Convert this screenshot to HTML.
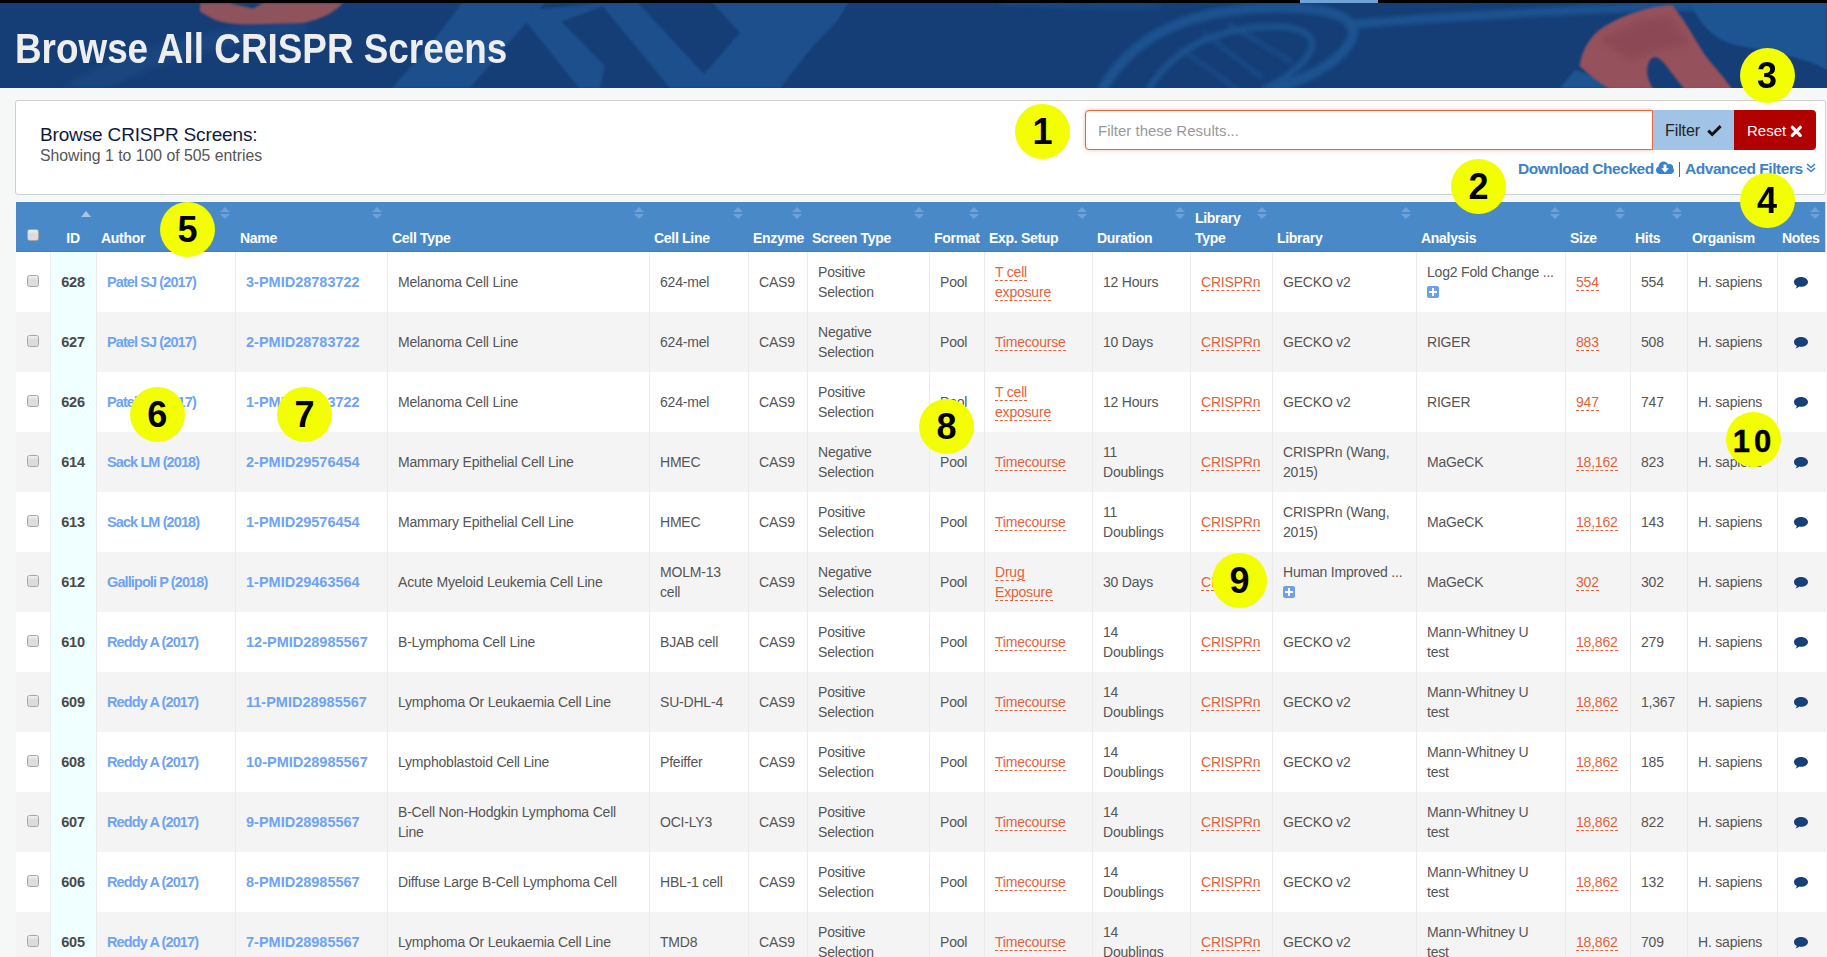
<!DOCTYPE html>
<html><head><meta charset="utf-8"><title>Browse All CRISPR Screens</title>
<style>
*{box-sizing:border-box;margin:0;padding:0}
html,body{width:1827px;height:957px;overflow:hidden}
body{background:#f6f8f7;font-family:"Liberation Sans",sans-serif;position:relative}
.topbar{position:absolute;left:0;top:0;width:1827px;height:3px;background:#000}
.topbar i{position:absolute;left:1300px;top:0;width:78px;height:3px;background:#6fa3d8}
.banner{position:absolute;left:0;top:3px;width:1827px;height:85px;background:#153e77;overflow:hidden}
.banner svg{position:absolute;left:0;top:0}
.title{position:absolute;left:15px;top:18px;font-weight:bold;font-size:43px;line-height:60px;color:#eeeeee;white-space:nowrap;transform-origin:0 0}
.panel{position:absolute;left:15px;top:100px;width:1811px;height:95px;background:#fff;border:1px solid #cfcfcf;border-radius:3px}
.abs{position:absolute;white-space:nowrap}
.ptitle{left:40px;top:123px;font-size:19px;letter-spacing:-0.15px;line-height:24px;color:#0d1b3e}
.psub{left:40px;top:146px;font-size:15.8px;line-height:20px;color:#555}
.inp{position:absolute;left:1085px;top:110px;width:568px;height:40px;border:1px solid #e8663f;border-radius:4px 0 0 4px;background:#fff;box-shadow:0 0 4px rgba(232,102,63,.45)}
.inp span{position:absolute;left:12px;top:10px;font-size:15px;line-height:20px;color:#999}
.bfilter{position:absolute;left:1653px;top:110px;width:81px;height:40px;background:#a1c3e5;color:#222;font-size:15px;line-height:40px}
.breset{position:absolute;left:1734px;top:110px;width:82px;height:40px;background:#b00000;color:#fff;font-size:15px;line-height:40px;border-radius:0 4px 4px 0}
.links{position:absolute;top:158px;font-size:15.5px;letter-spacing:-0.45px;line-height:20px;font-weight:bold;color:#3d82c6;white-space:nowrap}
.tbl{position:absolute;left:16px;top:202px;width:1810px;height:760px;background:#fff;border-left:1px solid #dcdcdc;border-right:1px solid #dcdcdc}
.thead{position:absolute;left:16px;top:202px;width:1809px;height:50px;background:#4a89c8;border-bottom:1px solid #3f7fc0}
.hl{position:absolute;color:#fff;font-weight:bold;font-size:14px;letter-spacing:-0.3px;line-height:20px;white-space:nowrap}
.sort{position:absolute;width:10px;height:13px}
.row{position:absolute;left:16px;width:1810px;height:60px}
.row.odd{background:#fff}
.row.even{background:#f4f4f4}
.vline{position:absolute;top:252px;width:1px;height:705px;background:#ebebeb}
.idcol{position:absolute;left:51px;top:252px;width:45px;height:705px;background:#f0ffff}
.c{position:absolute;font-size:14px;letter-spacing:-0.2px;line-height:20px;color:#555;white-space:nowrap}
.c.id{font-weight:bold;color:#4a4a4a;text-align:center;font-size:14.5px;letter-spacing:-0.2px}
.bl{font-weight:bold;color:#6ea3f4;font-size:14.5px;letter-spacing:0}
.au{letter-spacing:-0.9px}
.rl{color:#e0633d;border-bottom:1px dashed #e0633d}
.plus{display:inline-block;width:12px;height:12px;background:#6c9ff0;border-radius:2px;position:relative;vertical-align:middle;top:-1px}
.plus:before{content:"";position:absolute;left:5px;top:2px;width:2px;height:8px;background:#fff}
.plus:after{content:"";position:absolute;left:2px;top:5px;width:8px;height:2px;background:#fff}
.cb{position:absolute;width:12px;height:12px;border:1px solid #a6a6a6;border-radius:2.5px;background:linear-gradient(#f0f0f0,#dcdcdc 40%,#dcdcdc)}
.circ{position:absolute;width:55px;height:55px;border-radius:50%;background:#f3fe00;color:#000;font-weight:bold;font-size:36px;line-height:55px;text-align:center}
.circ span{display:inline-block}
</style></head><body>
<div class="topbar"><i></i></div>
<div class="banner"><svg width="1827" height="85" viewBox="0 3 1827 85">
<defs>
<filter id="bl1" x="-20%" y="-20%" width="140%" height="140%"><feGaussianBlur stdDeviation="1.2"/></filter>
<filter id="bl2" x="-20%" y="-50%" width="140%" height="200%"><feGaussianBlur stdDeviation="2"/></filter>
<filter id="bl3" x="-20%" y="-50%" width="140%" height="200%"><feGaussianBlur stdDeviation="3"/></filter>
</defs>
<rect x="0" y="3" width="1827" height="85" fill="#153e77"/>
<g fill="#1d4f8c" filter="url(#bl3)" opacity="0.9">
<path d="M60 88 C120 50 200 30 300 20 L310 30 C220 45 150 65 110 88 Z" opacity="0.5"/>
</g>
<g fill="#1d4f8b" filter="url(#bl1)">
<path d="M462 3 L545 3 L520 30 L470 88 L392 88 L430 45 Z"/>
<path d="M513 12 L600 3 L612 3 L560 22 Z"/>
<path d="M520 14 L548 8 L605 66 L600 88 L579 88 Z"/>
<path d="M600 3 L638 3 L705 75 L690 88 L670 88 Z"/>
<path d="M713 3 L848 3 L838 20 L813 46 L780 88 L685 88 L703 75 L740 33 Z"/>
</g>
<g fill="none" stroke="#1e5290" filter="url(#bl2)">
<path d="M1102 90 C1130 40 1180 12 1260 8 C1330 5 1365 18 1350 42 C1335 68 1300 80 1272 90" stroke-width="10"/>
<path d="M1148 90 C1170 55 1200 35 1250 28 C1300 22 1322 35 1308 55 C1298 70 1282 80 1262 90" stroke-width="6"/>
<path d="M1180 48 L1238 90 M1203 32 L1262 78 M1228 24 L1292 62" stroke-width="4" opacity="0.7"/>
<path d="M1345 25 C1420 18 1500 14 1600 9 C1700 5 1760 4 1827 3" stroke-width="9"/>
<path d="M1000 3 C1050 5 1100 8 1160 6" stroke-width="5" opacity="0.5"/>
</g>
<g fill="#1f5592" filter="url(#bl1)">
<path d="M1690 3 L1827 3 L1827 70 C1800 55 1760 50 1735 45 C1715 40 1700 25 1690 3 Z"/>
<path d="M1560 88 L1575 70 L1600 78 L1609 88 Z"/>
</g>
<g fill="#95515c" filter="url(#bl1)">
<path d="M200 3 L229 3 L253 8.5 L263 3 L343 3 C335 12 322 19 304 23 L251 24.5 C235 24 221 23.6 212 18.4 C206 15 202 13 200 11.4 Z" fill="#8e525d"/>
<path d="M1579.5 66 C1582 50 1590 35 1605 26 C1625 14 1650 6 1672 5 C1685 20 1695 40 1705 55 C1715 68 1725 78 1732 89 L1684.6 89 C1678 82 1670 70 1663 62 C1658 56 1653 56 1650 60 C1645 68 1647 80 1653.4 89 L1609 89 C1598 82 1588 74 1579.5 66 Z"/>
</g>
<g fill="#7e3d4a" opacity="0.35" filter="url(#bl3)">
<path d="M1600 40 L1640 20 L1670 15 L1690 45 L1660 50 L1630 60 Z"/>
</g>
</svg></div>
<div class="title" style="transform:scaleX(0.857)">Browse All CRISPR Screens</div>
<div class="panel"></div>
<div class="abs ptitle">Browse CRISPR Screens:</div>
<div class="abs psub">Showing 1 to 100 of 505 entries</div>
<div class="inp"><span>Filter these Results...</span></div>
<div class="bfilter"><span style="position:absolute;left:12px;top:1px;font-size:16px;letter-spacing:-0.1px">Filter</span><svg style="position:absolute;left:54px;top:15px" width="15" height="12" viewBox="0 0 15 12"><path d="M1.3 5.6 L5.2 9.5 L13.6 1.1" stroke="#111" stroke-width="2.9" fill="none"/></svg></div>
<div class="breset"><span style="position:absolute;left:13px;top:1px">Reset</span><svg style="position:absolute;left:56px;top:15px" width="13" height="13" viewBox="0 0 13 13"><path d="M2.3 2.3 L10.3 10.3 M10.3 2.3 L2.3 10.3" stroke="#fff" stroke-width="3.2" stroke-linecap="round" fill="none"/></svg></div>
<div class="links" style="left:1518px;top:159px">Download Checked</div>
<svg class="abs" style="left:1656px;top:160px" width="18" height="14" viewBox="0 0 18 14"><path d="M4 14 C1.8 14 0 12.3 0 10.2 C0 8.5 1.1 7.1 2.7 6.6 C2.7 6.5 2.7 6.3 2.7 6.2 C2.7 3.5 4.9 1.4 7.6 1.4 C9.6 1.4 11.3 2.6 12.1 4.3 C12.6 4 13.2 3.9 13.8 3.9 C15.7 3.9 17.2 5.4 17.2 7.3 C17.2 7.6 17.2 7.9 17.1 8.2 C17.7 8.8 18 9.6 18 10.5 C18 12.4 16.4 14 14.5 14 Z" fill="#3d82c6"/><path d="M7.6 4.6 H10.4 V8.2 H12.8 L9 12.4 L5.2 8.2 H7.6 Z" fill="#fff"/></svg>
<div class="abs" style="left:1679px;top:162px;width:1px;height:15px;background:#666"></div>
<div class="links" style="left:1685px;top:159px">Advanced Filters</div>
<svg class="abs" style="left:1806px;top:163px" width="10" height="10" viewBox="0 0 10 10"><path d="M1 1 L5 4.5 L9 1 M1 5 L5 8.5 L9 5" stroke="#3d82c6" stroke-width="1.6" fill="none"/></svg>
<div class="tbl"></div>

<div class="row odd" style="top:252px"></div>
<div class="row even" style="top:312px"></div>
<div class="row odd" style="top:372px"></div>
<div class="row even" style="top:432px"></div>
<div class="row odd" style="top:492px"></div>
<div class="row even" style="top:552px"></div>
<div class="row odd" style="top:612px"></div>
<div class="row even" style="top:672px"></div>
<div class="row odd" style="top:732px"></div>
<div class="row even" style="top:792px"></div>
<div class="row odd" style="top:852px"></div>
<div class="row even" style="top:912px"></div>
<div class="idcol"></div>
<div class="vline" style="left:50px"></div>
<div class="vline" style="left:96px"></div>
<div class="vline" style="left:235px"></div>
<div class="vline" style="left:387px"></div>
<div class="vline" style="left:649px"></div>
<div class="vline" style="left:748px"></div>
<div class="vline" style="left:807px"></div>
<div class="vline" style="left:929px"></div>
<div class="vline" style="left:984px"></div>
<div class="vline" style="left:1092px"></div>
<div class="vline" style="left:1190px"></div>
<div class="vline" style="left:1272px"></div>
<div class="vline" style="left:1416px"></div>
<div class="vline" style="left:1565px"></div>
<div class="vline" style="left:1630px"></div>
<div class="vline" style="left:1687px"></div>
<div class="vline" style="left:1777px"></div>
<div class="thead"></div>
<div class="cb" style="left:27px;top:229px"></div>
<div class="hl" style="left:50px;width:46px;text-align:center;top:228px">ID</div>
<svg class="sort" style="left:81px;top:207px" width="10" height="13" viewBox="0 0 10 13"><path d="M0 10 L5 4 L10 10 Z" fill="#a9c6e6"/></svg>
<div class="hl" style="left:101px;top:228px">Author</div>
<svg class="sort" style="left:220px;top:207px" width="10" height="13" viewBox="0 0 10 13"><path d="M0 5 L5 0 L10 5 Z M0 7 L5 12 L10 7 Z" fill="#6fa0d6"/></svg>
<div class="hl" style="left:240px;top:228px">Name</div>
<svg class="sort" style="left:372px;top:207px" width="10" height="13" viewBox="0 0 10 13"><path d="M0 5 L5 0 L10 5 Z M0 7 L5 12 L10 7 Z" fill="#6fa0d6"/></svg>
<div class="hl" style="left:392px;top:228px">Cell Type</div>
<svg class="sort" style="left:634px;top:207px" width="10" height="13" viewBox="0 0 10 13"><path d="M0 5 L5 0 L10 5 Z M0 7 L5 12 L10 7 Z" fill="#6fa0d6"/></svg>
<div class="hl" style="left:654px;top:228px">Cell Line</div>
<svg class="sort" style="left:733px;top:207px" width="10" height="13" viewBox="0 0 10 13"><path d="M0 5 L5 0 L10 5 Z M0 7 L5 12 L10 7 Z" fill="#6fa0d6"/></svg>
<div class="hl" style="left:753px;top:228px">Enzyme</div>
<svg class="sort" style="left:792px;top:207px" width="10" height="13" viewBox="0 0 10 13"><path d="M0 5 L5 0 L10 5 Z M0 7 L5 12 L10 7 Z" fill="#6fa0d6"/></svg>
<div class="hl" style="left:812px;top:228px">Screen Type</div>
<svg class="sort" style="left:914px;top:207px" width="10" height="13" viewBox="0 0 10 13"><path d="M0 5 L5 0 L10 5 Z M0 7 L5 12 L10 7 Z" fill="#6fa0d6"/></svg>
<div class="hl" style="left:934px;top:228px">Format</div>
<svg class="sort" style="left:969px;top:207px" width="10" height="13" viewBox="0 0 10 13"><path d="M0 5 L5 0 L10 5 Z M0 7 L5 12 L10 7 Z" fill="#6fa0d6"/></svg>
<div class="hl" style="left:989px;top:228px">Exp. Setup</div>
<svg class="sort" style="left:1077px;top:207px" width="10" height="13" viewBox="0 0 10 13"><path d="M0 5 L5 0 L10 5 Z M0 7 L5 12 L10 7 Z" fill="#6fa0d6"/></svg>
<div class="hl" style="left:1097px;top:228px">Duration</div>
<svg class="sort" style="left:1175px;top:207px" width="10" height="13" viewBox="0 0 10 13"><path d="M0 5 L5 0 L10 5 Z M0 7 L5 12 L10 7 Z" fill="#6fa0d6"/></svg>
<div class="hl" style="left:1195px;top:208px">Library<br>Type</div>
<svg class="sort" style="left:1257px;top:207px" width="10" height="13" viewBox="0 0 10 13"><path d="M0 5 L5 0 L10 5 Z M0 7 L5 12 L10 7 Z" fill="#6fa0d6"/></svg>
<div class="hl" style="left:1277px;top:228px">Library</div>
<svg class="sort" style="left:1401px;top:207px" width="10" height="13" viewBox="0 0 10 13"><path d="M0 5 L5 0 L10 5 Z M0 7 L5 12 L10 7 Z" fill="#6fa0d6"/></svg>
<div class="hl" style="left:1421px;top:228px">Analysis</div>
<svg class="sort" style="left:1550px;top:207px" width="10" height="13" viewBox="0 0 10 13"><path d="M0 5 L5 0 L10 5 Z M0 7 L5 12 L10 7 Z" fill="#6fa0d6"/></svg>
<div class="hl" style="left:1570px;top:228px">Size</div>
<svg class="sort" style="left:1615px;top:207px" width="10" height="13" viewBox="0 0 10 13"><path d="M0 5 L5 0 L10 5 Z M0 7 L5 12 L10 7 Z" fill="#6fa0d6"/></svg>
<div class="hl" style="left:1635px;top:228px">Hits</div>
<svg class="sort" style="left:1672px;top:207px" width="10" height="13" viewBox="0 0 10 13"><path d="M0 5 L5 0 L10 5 Z M0 7 L5 12 L10 7 Z" fill="#6fa0d6"/></svg>
<div class="hl" style="left:1692px;top:228px">Organism</div>
<svg class="sort" style="left:1762px;top:207px" width="10" height="13" viewBox="0 0 10 13"><path d="M0 5 L5 0 L10 5 Z M0 7 L5 12 L10 7 Z" fill="#6fa0d6"/></svg>
<div class="hl" style="left:1782px;top:228px">Notes</div>
<svg class="sort" style="left:1810px;top:207px" width="10" height="13" viewBox="0 0 10 13"><path d="M0 5 L5 0 L10 5 Z M0 7 L5 12 L10 7 Z" fill="#6fa0d6"/></svg>
<div class="cb" style="left:27px;top:275px"></div>
<div class="c id" style="left:50px;width:46px;top:272px">628</div>
<div class="c" style="left:107px;top:272px"><span class="bl au">Patel SJ (2017)</span></div>
<div class="c" style="left:246px;top:272px"><span class="bl">3-PMID28783722</span></div>
<div class="c" style="left:398px;top:272px">Melanoma Cell Line</div>
<div class="c" style="left:660px;top:272px">624-mel</div>
<div class="c" style="left:759px;top:272px">CAS9</div>
<div class="c" style="left:818px;top:262px">Positive<br>Selection</div>
<div class="c" style="left:940px;top:272px">Pool</div>
<div class="c" style="left:995px;top:262px"><span class="rl">T cell</span><br><span class="rl">exposure</span></div>
<div class="c" style="left:1103px;top:272px">12 Hours</div>
<div class="c" style="left:1201px;top:272px"><span class="rl">CRISPRn</span></div>
<div class="c" style="left:1283px;top:272px">GECKO v2</div>
<div class="c" style="left:1427px;top:262px">Log2 Fold Change ...<br><span class="plus"></span></div>
<div class="c" style="left:1576px;top:272px"><span class="rl">554</span></div>
<div class="c" style="left:1641px;top:272px">554</div>
<div class="c" style="left:1698px;top:272px">H. sapiens</div>
<svg class="abs" style="left:1794px;top:277px" width="14" height="12" viewBox="0 0 15 13" preserveAspectRatio="none"><path d="M7.5 0 C11.6 0 15 2.4 15 5.3 C15 8.2 11.6 10.6 7.5 10.6 C6.8 10.6 6.2 10.5 5.6 10.4 C4.4 11.6 2.9 12.4 1.5 12.6 C2.3 11.8 2.9 10.9 3 9.8 C1.2 8.8 0 7.2 0 5.3 C0 2.4 3.4 0 7.5 0 Z" fill="#173f7a"/></svg>
<div class="cb" style="left:27px;top:335px"></div>
<div class="c id" style="left:50px;width:46px;top:332px">627</div>
<div class="c" style="left:107px;top:332px"><span class="bl au">Patel SJ (2017)</span></div>
<div class="c" style="left:246px;top:332px"><span class="bl">2-PMID28783722</span></div>
<div class="c" style="left:398px;top:332px">Melanoma Cell Line</div>
<div class="c" style="left:660px;top:332px">624-mel</div>
<div class="c" style="left:759px;top:332px">CAS9</div>
<div class="c" style="left:818px;top:322px">Negative<br>Selection</div>
<div class="c" style="left:940px;top:332px">Pool</div>
<div class="c" style="left:995px;top:332px"><span class="rl">Timecourse</span></div>
<div class="c" style="left:1103px;top:332px">10 Days</div>
<div class="c" style="left:1201px;top:332px"><span class="rl">CRISPRn</span></div>
<div class="c" style="left:1283px;top:332px">GECKO v2</div>
<div class="c" style="left:1427px;top:332px">RIGER</div>
<div class="c" style="left:1576px;top:332px"><span class="rl">883</span></div>
<div class="c" style="left:1641px;top:332px">508</div>
<div class="c" style="left:1698px;top:332px">H. sapiens</div>
<svg class="abs" style="left:1794px;top:337px" width="14" height="12" viewBox="0 0 15 13" preserveAspectRatio="none"><path d="M7.5 0 C11.6 0 15 2.4 15 5.3 C15 8.2 11.6 10.6 7.5 10.6 C6.8 10.6 6.2 10.5 5.6 10.4 C4.4 11.6 2.9 12.4 1.5 12.6 C2.3 11.8 2.9 10.9 3 9.8 C1.2 8.8 0 7.2 0 5.3 C0 2.4 3.4 0 7.5 0 Z" fill="#173f7a"/></svg>
<div class="cb" style="left:27px;top:395px"></div>
<div class="c id" style="left:50px;width:46px;top:392px">626</div>
<div class="c" style="left:107px;top:392px"><span class="bl au">Patel SJ (2017)</span></div>
<div class="c" style="left:246px;top:392px"><span class="bl">1-PMID28783722</span></div>
<div class="c" style="left:398px;top:392px">Melanoma Cell Line</div>
<div class="c" style="left:660px;top:392px">624-mel</div>
<div class="c" style="left:759px;top:392px">CAS9</div>
<div class="c" style="left:818px;top:382px">Positive<br>Selection</div>
<div class="c" style="left:940px;top:392px">Pool</div>
<div class="c" style="left:995px;top:382px"><span class="rl">T cell</span><br><span class="rl">exposure</span></div>
<div class="c" style="left:1103px;top:392px">12 Hours</div>
<div class="c" style="left:1201px;top:392px"><span class="rl">CRISPRn</span></div>
<div class="c" style="left:1283px;top:392px">GECKO v2</div>
<div class="c" style="left:1427px;top:392px">RIGER</div>
<div class="c" style="left:1576px;top:392px"><span class="rl">947</span></div>
<div class="c" style="left:1641px;top:392px">747</div>
<div class="c" style="left:1698px;top:392px">H. sapiens</div>
<svg class="abs" style="left:1794px;top:397px" width="14" height="12" viewBox="0 0 15 13" preserveAspectRatio="none"><path d="M7.5 0 C11.6 0 15 2.4 15 5.3 C15 8.2 11.6 10.6 7.5 10.6 C6.8 10.6 6.2 10.5 5.6 10.4 C4.4 11.6 2.9 12.4 1.5 12.6 C2.3 11.8 2.9 10.9 3 9.8 C1.2 8.8 0 7.2 0 5.3 C0 2.4 3.4 0 7.5 0 Z" fill="#173f7a"/></svg>
<div class="cb" style="left:27px;top:455px"></div>
<div class="c id" style="left:50px;width:46px;top:452px">614</div>
<div class="c" style="left:107px;top:452px"><span class="bl au">Sack LM (2018)</span></div>
<div class="c" style="left:246px;top:452px"><span class="bl">2-PMID29576454</span></div>
<div class="c" style="left:398px;top:452px">Mammary Epithelial Cell Line</div>
<div class="c" style="left:660px;top:452px">HMEC</div>
<div class="c" style="left:759px;top:452px">CAS9</div>
<div class="c" style="left:818px;top:442px">Negative<br>Selection</div>
<div class="c" style="left:940px;top:452px">Pool</div>
<div class="c" style="left:995px;top:452px"><span class="rl">Timecourse</span></div>
<div class="c" style="left:1103px;top:442px">11<br>Doublings</div>
<div class="c" style="left:1201px;top:452px"><span class="rl">CRISPRn</span></div>
<div class="c" style="left:1283px;top:442px">CRISPRn (Wang,<br>2015)</div>
<div class="c" style="left:1427px;top:452px">MaGeCK</div>
<div class="c" style="left:1576px;top:452px"><span class="rl">18,162</span></div>
<div class="c" style="left:1641px;top:452px">823</div>
<div class="c" style="left:1698px;top:452px">H. sapiens</div>
<svg class="abs" style="left:1794px;top:457px" width="14" height="12" viewBox="0 0 15 13" preserveAspectRatio="none"><path d="M7.5 0 C11.6 0 15 2.4 15 5.3 C15 8.2 11.6 10.6 7.5 10.6 C6.8 10.6 6.2 10.5 5.6 10.4 C4.4 11.6 2.9 12.4 1.5 12.6 C2.3 11.8 2.9 10.9 3 9.8 C1.2 8.8 0 7.2 0 5.3 C0 2.4 3.4 0 7.5 0 Z" fill="#173f7a"/></svg>
<div class="cb" style="left:27px;top:515px"></div>
<div class="c id" style="left:50px;width:46px;top:512px">613</div>
<div class="c" style="left:107px;top:512px"><span class="bl au">Sack LM (2018)</span></div>
<div class="c" style="left:246px;top:512px"><span class="bl">1-PMID29576454</span></div>
<div class="c" style="left:398px;top:512px">Mammary Epithelial Cell Line</div>
<div class="c" style="left:660px;top:512px">HMEC</div>
<div class="c" style="left:759px;top:512px">CAS9</div>
<div class="c" style="left:818px;top:502px">Positive<br>Selection</div>
<div class="c" style="left:940px;top:512px">Pool</div>
<div class="c" style="left:995px;top:512px"><span class="rl">Timecourse</span></div>
<div class="c" style="left:1103px;top:502px">11<br>Doublings</div>
<div class="c" style="left:1201px;top:512px"><span class="rl">CRISPRn</span></div>
<div class="c" style="left:1283px;top:502px">CRISPRn (Wang,<br>2015)</div>
<div class="c" style="left:1427px;top:512px">MaGeCK</div>
<div class="c" style="left:1576px;top:512px"><span class="rl">18,162</span></div>
<div class="c" style="left:1641px;top:512px">143</div>
<div class="c" style="left:1698px;top:512px">H. sapiens</div>
<svg class="abs" style="left:1794px;top:517px" width="14" height="12" viewBox="0 0 15 13" preserveAspectRatio="none"><path d="M7.5 0 C11.6 0 15 2.4 15 5.3 C15 8.2 11.6 10.6 7.5 10.6 C6.8 10.6 6.2 10.5 5.6 10.4 C4.4 11.6 2.9 12.4 1.5 12.6 C2.3 11.8 2.9 10.9 3 9.8 C1.2 8.8 0 7.2 0 5.3 C0 2.4 3.4 0 7.5 0 Z" fill="#173f7a"/></svg>
<div class="cb" style="left:27px;top:575px"></div>
<div class="c id" style="left:50px;width:46px;top:572px">612</div>
<div class="c" style="left:107px;top:572px"><span class="bl au">Gallipoli P (2018)</span></div>
<div class="c" style="left:246px;top:572px"><span class="bl">1-PMID29463564</span></div>
<div class="c" style="left:398px;top:572px">Acute Myeloid Leukemia Cell Line</div>
<div class="c" style="left:660px;top:562px">MOLM-13<br>cell</div>
<div class="c" style="left:759px;top:572px">CAS9</div>
<div class="c" style="left:818px;top:562px">Negative<br>Selection</div>
<div class="c" style="left:940px;top:572px">Pool</div>
<div class="c" style="left:995px;top:562px"><span class="rl">Drug</span><br><span class="rl">Exposure</span></div>
<div class="c" style="left:1103px;top:572px">30 Days</div>
<div class="c" style="left:1201px;top:572px"><span class="rl">CRISPRn</span></div>
<div class="c" style="left:1283px;top:562px">Human Improved ...<br><span class="plus"></span></div>
<div class="c" style="left:1427px;top:572px">MaGeCK</div>
<div class="c" style="left:1576px;top:572px"><span class="rl">302</span></div>
<div class="c" style="left:1641px;top:572px">302</div>
<div class="c" style="left:1698px;top:572px">H. sapiens</div>
<svg class="abs" style="left:1794px;top:577px" width="14" height="12" viewBox="0 0 15 13" preserveAspectRatio="none"><path d="M7.5 0 C11.6 0 15 2.4 15 5.3 C15 8.2 11.6 10.6 7.5 10.6 C6.8 10.6 6.2 10.5 5.6 10.4 C4.4 11.6 2.9 12.4 1.5 12.6 C2.3 11.8 2.9 10.9 3 9.8 C1.2 8.8 0 7.2 0 5.3 C0 2.4 3.4 0 7.5 0 Z" fill="#173f7a"/></svg>
<div class="cb" style="left:27px;top:635px"></div>
<div class="c id" style="left:50px;width:46px;top:632px">610</div>
<div class="c" style="left:107px;top:632px"><span class="bl au">Reddy A (2017)</span></div>
<div class="c" style="left:246px;top:632px"><span class="bl">12-PMID28985567</span></div>
<div class="c" style="left:398px;top:632px">B-Lymphoma Cell Line</div>
<div class="c" style="left:660px;top:632px">BJAB cell</div>
<div class="c" style="left:759px;top:632px">CAS9</div>
<div class="c" style="left:818px;top:622px">Positive<br>Selection</div>
<div class="c" style="left:940px;top:632px">Pool</div>
<div class="c" style="left:995px;top:632px"><span class="rl">Timecourse</span></div>
<div class="c" style="left:1103px;top:622px">14<br>Doublings</div>
<div class="c" style="left:1201px;top:632px"><span class="rl">CRISPRn</span></div>
<div class="c" style="left:1283px;top:632px">GECKO v2</div>
<div class="c" style="left:1427px;top:622px">Mann-Whitney U<br>test</div>
<div class="c" style="left:1576px;top:632px"><span class="rl">18,862</span></div>
<div class="c" style="left:1641px;top:632px">279</div>
<div class="c" style="left:1698px;top:632px">H. sapiens</div>
<svg class="abs" style="left:1794px;top:637px" width="14" height="12" viewBox="0 0 15 13" preserveAspectRatio="none"><path d="M7.5 0 C11.6 0 15 2.4 15 5.3 C15 8.2 11.6 10.6 7.5 10.6 C6.8 10.6 6.2 10.5 5.6 10.4 C4.4 11.6 2.9 12.4 1.5 12.6 C2.3 11.8 2.9 10.9 3 9.8 C1.2 8.8 0 7.2 0 5.3 C0 2.4 3.4 0 7.5 0 Z" fill="#173f7a"/></svg>
<div class="cb" style="left:27px;top:695px"></div>
<div class="c id" style="left:50px;width:46px;top:692px">609</div>
<div class="c" style="left:107px;top:692px"><span class="bl au">Reddy A (2017)</span></div>
<div class="c" style="left:246px;top:692px"><span class="bl">11-PMID28985567</span></div>
<div class="c" style="left:398px;top:692px">Lymphoma Or Leukaemia Cell Line</div>
<div class="c" style="left:660px;top:692px">SU-DHL-4</div>
<div class="c" style="left:759px;top:692px">CAS9</div>
<div class="c" style="left:818px;top:682px">Positive<br>Selection</div>
<div class="c" style="left:940px;top:692px">Pool</div>
<div class="c" style="left:995px;top:692px"><span class="rl">Timecourse</span></div>
<div class="c" style="left:1103px;top:682px">14<br>Doublings</div>
<div class="c" style="left:1201px;top:692px"><span class="rl">CRISPRn</span></div>
<div class="c" style="left:1283px;top:692px">GECKO v2</div>
<div class="c" style="left:1427px;top:682px">Mann-Whitney U<br>test</div>
<div class="c" style="left:1576px;top:692px"><span class="rl">18,862</span></div>
<div class="c" style="left:1641px;top:692px">1,367</div>
<div class="c" style="left:1698px;top:692px">H. sapiens</div>
<svg class="abs" style="left:1794px;top:697px" width="14" height="12" viewBox="0 0 15 13" preserveAspectRatio="none"><path d="M7.5 0 C11.6 0 15 2.4 15 5.3 C15 8.2 11.6 10.6 7.5 10.6 C6.8 10.6 6.2 10.5 5.6 10.4 C4.4 11.6 2.9 12.4 1.5 12.6 C2.3 11.8 2.9 10.9 3 9.8 C1.2 8.8 0 7.2 0 5.3 C0 2.4 3.4 0 7.5 0 Z" fill="#173f7a"/></svg>
<div class="cb" style="left:27px;top:755px"></div>
<div class="c id" style="left:50px;width:46px;top:752px">608</div>
<div class="c" style="left:107px;top:752px"><span class="bl au">Reddy A (2017)</span></div>
<div class="c" style="left:246px;top:752px"><span class="bl">10-PMID28985567</span></div>
<div class="c" style="left:398px;top:752px">Lymphoblastoid Cell Line</div>
<div class="c" style="left:660px;top:752px">Pfeiffer</div>
<div class="c" style="left:759px;top:752px">CAS9</div>
<div class="c" style="left:818px;top:742px">Positive<br>Selection</div>
<div class="c" style="left:940px;top:752px">Pool</div>
<div class="c" style="left:995px;top:752px"><span class="rl">Timecourse</span></div>
<div class="c" style="left:1103px;top:742px">14<br>Doublings</div>
<div class="c" style="left:1201px;top:752px"><span class="rl">CRISPRn</span></div>
<div class="c" style="left:1283px;top:752px">GECKO v2</div>
<div class="c" style="left:1427px;top:742px">Mann-Whitney U<br>test</div>
<div class="c" style="left:1576px;top:752px"><span class="rl">18,862</span></div>
<div class="c" style="left:1641px;top:752px">185</div>
<div class="c" style="left:1698px;top:752px">H. sapiens</div>
<svg class="abs" style="left:1794px;top:757px" width="14" height="12" viewBox="0 0 15 13" preserveAspectRatio="none"><path d="M7.5 0 C11.6 0 15 2.4 15 5.3 C15 8.2 11.6 10.6 7.5 10.6 C6.8 10.6 6.2 10.5 5.6 10.4 C4.4 11.6 2.9 12.4 1.5 12.6 C2.3 11.8 2.9 10.9 3 9.8 C1.2 8.8 0 7.2 0 5.3 C0 2.4 3.4 0 7.5 0 Z" fill="#173f7a"/></svg>
<div class="cb" style="left:27px;top:815px"></div>
<div class="c id" style="left:50px;width:46px;top:812px">607</div>
<div class="c" style="left:107px;top:812px"><span class="bl au">Reddy A (2017)</span></div>
<div class="c" style="left:246px;top:812px"><span class="bl">9-PMID28985567</span></div>
<div class="c" style="left:398px;top:802px">B-Cell Non-Hodgkin Lymphoma Cell<br>Line</div>
<div class="c" style="left:660px;top:812px">OCI-LY3</div>
<div class="c" style="left:759px;top:812px">CAS9</div>
<div class="c" style="left:818px;top:802px">Positive<br>Selection</div>
<div class="c" style="left:940px;top:812px">Pool</div>
<div class="c" style="left:995px;top:812px"><span class="rl">Timecourse</span></div>
<div class="c" style="left:1103px;top:802px">14<br>Doublings</div>
<div class="c" style="left:1201px;top:812px"><span class="rl">CRISPRn</span></div>
<div class="c" style="left:1283px;top:812px">GECKO v2</div>
<div class="c" style="left:1427px;top:802px">Mann-Whitney U<br>test</div>
<div class="c" style="left:1576px;top:812px"><span class="rl">18,862</span></div>
<div class="c" style="left:1641px;top:812px">822</div>
<div class="c" style="left:1698px;top:812px">H. sapiens</div>
<svg class="abs" style="left:1794px;top:817px" width="14" height="12" viewBox="0 0 15 13" preserveAspectRatio="none"><path d="M7.5 0 C11.6 0 15 2.4 15 5.3 C15 8.2 11.6 10.6 7.5 10.6 C6.8 10.6 6.2 10.5 5.6 10.4 C4.4 11.6 2.9 12.4 1.5 12.6 C2.3 11.8 2.9 10.9 3 9.8 C1.2 8.8 0 7.2 0 5.3 C0 2.4 3.4 0 7.5 0 Z" fill="#173f7a"/></svg>
<div class="cb" style="left:27px;top:875px"></div>
<div class="c id" style="left:50px;width:46px;top:872px">606</div>
<div class="c" style="left:107px;top:872px"><span class="bl au">Reddy A (2017)</span></div>
<div class="c" style="left:246px;top:872px"><span class="bl">8-PMID28985567</span></div>
<div class="c" style="left:398px;top:872px">Diffuse Large B-Cell Lymphoma Cell</div>
<div class="c" style="left:660px;top:872px">HBL-1 cell</div>
<div class="c" style="left:759px;top:872px">CAS9</div>
<div class="c" style="left:818px;top:862px">Positive<br>Selection</div>
<div class="c" style="left:940px;top:872px">Pool</div>
<div class="c" style="left:995px;top:872px"><span class="rl">Timecourse</span></div>
<div class="c" style="left:1103px;top:862px">14<br>Doublings</div>
<div class="c" style="left:1201px;top:872px"><span class="rl">CRISPRn</span></div>
<div class="c" style="left:1283px;top:872px">GECKO v2</div>
<div class="c" style="left:1427px;top:862px">Mann-Whitney U<br>test</div>
<div class="c" style="left:1576px;top:872px"><span class="rl">18,862</span></div>
<div class="c" style="left:1641px;top:872px">132</div>
<div class="c" style="left:1698px;top:872px">H. sapiens</div>
<svg class="abs" style="left:1794px;top:877px" width="14" height="12" viewBox="0 0 15 13" preserveAspectRatio="none"><path d="M7.5 0 C11.6 0 15 2.4 15 5.3 C15 8.2 11.6 10.6 7.5 10.6 C6.8 10.6 6.2 10.5 5.6 10.4 C4.4 11.6 2.9 12.4 1.5 12.6 C2.3 11.8 2.9 10.9 3 9.8 C1.2 8.8 0 7.2 0 5.3 C0 2.4 3.4 0 7.5 0 Z" fill="#173f7a"/></svg>
<div class="cb" style="left:27px;top:935px"></div>
<div class="c id" style="left:50px;width:46px;top:932px">605</div>
<div class="c" style="left:107px;top:932px"><span class="bl au">Reddy A (2017)</span></div>
<div class="c" style="left:246px;top:932px"><span class="bl">7-PMID28985567</span></div>
<div class="c" style="left:398px;top:932px">Lymphoma Or Leukaemia Cell Line</div>
<div class="c" style="left:660px;top:932px">TMD8</div>
<div class="c" style="left:759px;top:932px">CAS9</div>
<div class="c" style="left:818px;top:922px">Positive<br>Selection</div>
<div class="c" style="left:940px;top:932px">Pool</div>
<div class="c" style="left:995px;top:932px"><span class="rl">Timecourse</span></div>
<div class="c" style="left:1103px;top:922px">14<br>Doublings</div>
<div class="c" style="left:1201px;top:932px"><span class="rl">CRISPRn</span></div>
<div class="c" style="left:1283px;top:932px">GECKO v2</div>
<div class="c" style="left:1427px;top:922px">Mann-Whitney U<br>test</div>
<div class="c" style="left:1576px;top:932px"><span class="rl">18,862</span></div>
<div class="c" style="left:1641px;top:932px">709</div>
<div class="c" style="left:1698px;top:932px">H. sapiens</div>
<svg class="abs" style="left:1794px;top:937px" width="14" height="12" viewBox="0 0 15 13" preserveAspectRatio="none"><path d="M7.5 0 C11.6 0 15 2.4 15 5.3 C15 8.2 11.6 10.6 7.5 10.6 C6.8 10.6 6.2 10.5 5.6 10.4 C4.4 11.6 2.9 12.4 1.5 12.6 C2.3 11.8 2.9 10.9 3 9.8 C1.2 8.8 0 7.2 0 5.3 C0 2.4 3.4 0 7.5 0 Z" fill="#173f7a"/></svg>
<div class="circ" style="left:1014.9px;top:103.5px"><span>1</span></div>
<div class="circ" style="left:1450.9px;top:158.5px"><span>2</span></div>
<div class="circ" style="left:1739.5px;top:48.0px"><span>3</span></div>
<div class="circ" style="left:1739.5px;top:173.3px"><span>4</span></div>
<div class="circ" style="left:160.0px;top:201.5px"><span>5</span></div>
<div class="circ" style="left:129.8px;top:386.5px"><span>6</span></div>
<div class="circ" style="left:276.9px;top:386.5px"><span>7</span></div>
<div class="circ" style="left:919.0px;top:399.3px"><span>8</span></div>
<div class="circ" style="left:1212.0px;top:552.5px"><span>9</span></div>
<div class="circ" style="left:1726.0px;top:412.2px"><span style="font-size:31px;letter-spacing:4px;margin-left:1px;-webkit-text-stroke:0.4px #000">10</span></div>
</body></html>
